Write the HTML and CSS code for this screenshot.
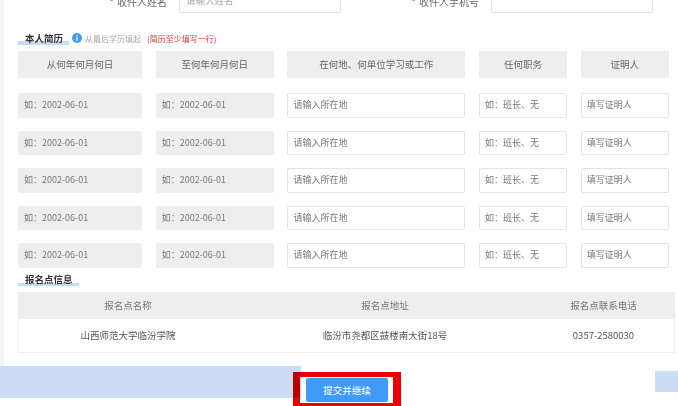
FILE: index.html
```html
<!DOCTYPE html>
<html lang="zh">
<head>
<meta charset="utf-8">
<title>本人简历</title>
<link rel="stylesheet" href="styles.css">
</head>
<body>
<div class="page">
  <div class="receiver">
    <div class="field"><label class="label"><i>*</i>收件人姓名</label><div class="box name">请输入姓名</div></div>
    <div class="field second"><label class="label"><i>*</i>收件人手机号</label><div class="box phone"></div></div>
  </div>
  <div class="heading-row">
    <h2 class="title resume">本人简历</h2>
    <svg class="info" viewBox="0 0 10 10" width="10" height="10"><circle cx="5" cy="5" r="5" fill="#3f9bfa"/><rect x="4.4" y="2" width="1.2" height="1.2" fill="#fff"/><rect x="4.4" y="4" width="1.2" height="4" fill="#fff"/></svg>
    <span class="hint">从最后学历填起</span>
    <span class="warn">(简历至少填写一行)</span>
  </div>
  <div class="grid">
    <div class="th">从何年何月何日</div><div class="th">至何年何月何日</div><div class="th">在何地、何单位学习或工作</div><div class="th">任何职务</div><div class="th">证明人</div>
  </div>
  <div class="rows">
    <div class="grid"><div class="cell gray">如：2002-06-01</div><div class="cell gray">如：2002-06-01</div><div class="cell">请输入所在地</div><div class="cell">如：班长、无</div><div class="cell">填写证明人</div></div>
    <div class="grid"><div class="cell gray">如：2002-06-01</div><div class="cell gray">如：2002-06-01</div><div class="cell">请输入所在地</div><div class="cell">如：班长、无</div><div class="cell">填写证明人</div></div>
    <div class="grid"><div class="cell gray">如：2002-06-01</div><div class="cell gray">如：2002-06-01</div><div class="cell">请输入所在地</div><div class="cell">如：班长、无</div><div class="cell">填写证明人</div></div>
    <div class="grid"><div class="cell gray">如：2002-06-01</div><div class="cell gray">如：2002-06-01</div><div class="cell">请输入所在地</div><div class="cell">如：班长、无</div><div class="cell">填写证明人</div></div>
    <div class="grid"><div class="cell gray">如：2002-06-01</div><div class="cell gray">如：2002-06-01</div><div class="cell">请输入所在地</div><div class="cell">如：班长、无</div><div class="cell">填写证明人</div></div>
  </div>
  <h2 class="title site">报名点信息</h2>
  <div class="site-table">
    <div class="site-head"><span>报名点名称</span><span>报名点地址</span><span>报名点联系电话</span></div>
    <div class="site-body"><span>山西师范大学临汾学院</span><span>临汾市尧都区鼓楼南大街18号</span><span>0357-2580030</span></div>
  </div>
  <div class="mark"></div>
  <div class="band-left"></div>
  <div class="band-right"></div>
  <button class="submit">提交并继续</button>
</div>
</body>
</html>
```
FILE: styles.css
```css
* { box-sizing: border-box; }
html, body { margin: 0; padding: 0; background: #fff; }
body { width: 678px; height: 406px; overflow: hidden; font-family: "Noto Sans CJK SC", "Liberation Sans", sans-serif; }
.page { position: relative; width: 678px; height: 406px; overflow: hidden; padding: 0 3px 0 18px; color: #666; filter: blur(0.5px); background: linear-gradient(#f4f4f4, #f4f4f4) no-repeat 0 0 / 4px 366px #fff; }
.receiver { display: flex; height: 14px; margin-top: -12px; }
.field { display: flex; align-items: center; height: 25px; }
.label { font-size: 10px; color: #666; width: 149px; margin-left: 12px; margin-top: 2px; padding-right: 12px; text-align: right; white-space: nowrap; }
.label i { color: #e33; font-style: normal; margin-right: 3px; }
.second .label { width: 150px; margin-left: 0; }
.box { height: 25px; border: 1px solid #e4e4e4; border-radius: 2px; background: #fff; font-size: 9.5px; color: #aaa; padding-left: 6px; line-height: 23px; width: 162px; }
.heading-row { display: flex; align-items: center; height: 14px; margin-top: 29px; }
.title { margin: 0; font-size: 9.5px; line-height: 14px; font-weight: 700; color: #333; background: linear-gradient(to bottom, transparent 10px, #c5def7 10px); height: 14px; }
.resume { width: 51px; padding-left: 7px; }
.info { margin-left: 3px; }
.hint { font-size: 8px; color: #aaa; margin-left: 3px; white-space: nowrap; }
.warn { font-size: 8px; color: #e33; margin-left: 6px; white-space: nowrap; }
.grid { display: grid; grid-template-columns: 124px 118px 178px 88px 88px; column-gap: 13.7px; }
.th { height: 27px; margin-top: 6px; background: #eee; font-size: 9.5px; line-height: 27px; text-align: center; color: #666; }
.rows { display: flex; flex-direction: column; gap: 13px; margin-top: 15px; }
.cell { height: 24.5px; border: 1px solid #e4e4e4; border-radius: 2px; background: #fff; font-size: 9px; line-height: 22px; padding-left: 5px; color: #777; white-space: nowrap; overflow: hidden; }
.cell.gray { background: #eee; border-color: #eee; }
.site { width: 61px; padding-left: 7px; margin-top: 5px; height: 13px; line-height: 12px; }
.site-table { width: 657px; margin-top: 6px; border: 1px solid #f1f1f1; border-top: 0; }
.site-head, .site-body { display: grid; grid-template-columns: 220px 294px 143px; margin: 0 -1px; text-align: center; font-size: 9.5px; }
.site-head { height: 27px; line-height: 27px; background: #eee; color: #777; }
.site-body { height: 33px; line-height: 33px; color: #555; }
.mark { position: absolute; left: 293px; top: 372px; width: 108px; height: 34px; border: solid #ee0000; border-width: 5px 8px 3px 7px; background: #fff; }
.band-left { position: absolute; left: 0; top: 366px; width: 301px; height: 32px; background: #cbdcf5; mix-blend-mode: multiply; }
.band-right { position: absolute; left: 655px; top: 371px; width: 23px; height: 21px; background: #cbdcf5; }
.submit { position: absolute; left: 306px; top: 378px; width: 82px; height: 24px; border: 0; border-radius: 2px; background: #3f9bfa; color: #fff; font: 9.5px "Noto Sans CJK SC", sans-serif; padding: 0; }
```
